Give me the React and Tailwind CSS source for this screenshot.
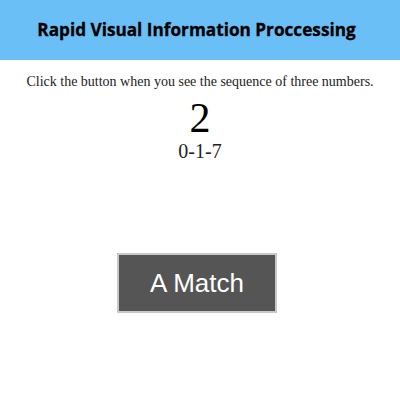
export default function App() {
  return (
    <div className="w-[400px] h-[400px] bg-white overflow-hidden">
      <div className="h-[60px] bg-[#6bbff7] flex items-center justify-center">
        <h1 className="text-[17.2px] font-bold text-black font-['Open_Sans',sans-serif] pr-[7px] [-webkit-text-stroke:0.3px_black]">
          Rapid Visual Information Proccessing
        </h1>
      </div>

      <div className="flex flex-col items-center pt-[12px] font-['Liberation_Serif',serif] text-[#222]">
        <p className="text-[14px] leading-[20px]">
          Click the button when you see the sequence of three numbers.
        </p>
        <div className="mt-[5px] text-[42px] leading-[42px] text-black">2</div>
        <div className="text-[20px] leading-[24px]">0-1-7</div>
      </div>

      <div className="flex pl-[117px] mt-[90px]">
        <button className="w-[160px] h-[60px] bg-[#555] border-2 border-[#c8c8c8] text-white text-[26px] font-['Liberation_Sans',sans-serif]">
          A Match
        </button>
      </div>
    </div>
  )
}
